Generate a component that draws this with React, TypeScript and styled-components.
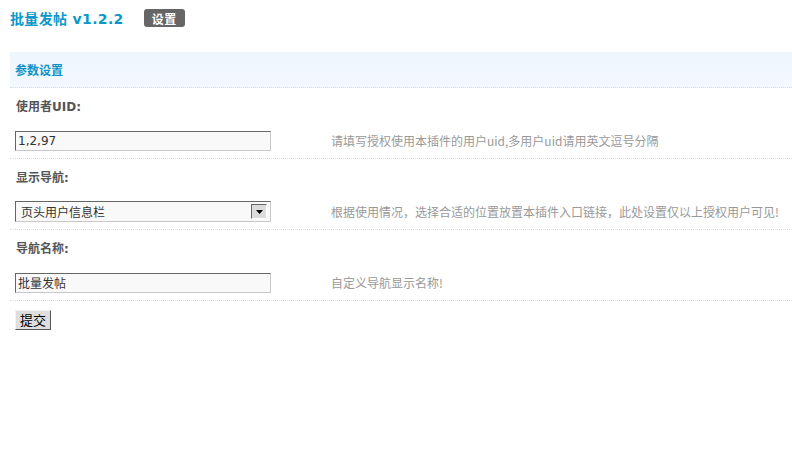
import React from "react";
import styled, { createGlobalStyle } from "styled-components";

const Global = createGlobalStyle`
  html, body { margin: 0; padding: 0; background: #fff; }
  body { font: 12px "DejaVu Sans", "Noto Sans CJK SC", sans-serif; color: #555; }
`;

const Page = styled.div`
  padding: 0 0 0 10px;
`;

const TopBar = styled.div`
  display: flex;
  align-items: center;
  height: 36px;
  gap: 20px;
`;

const Title = styled.h1`
  margin: 0;
  font: bold 14px "DejaVu Sans", "Noto Sans CJK SC", sans-serif;
  color: #0a97c9;
  letter-spacing: 0.35px;
`;

const Badge = styled.span`
  display: inline-flex;
  align-items: center;
  justify-content: center;
  height: 18px;
  padding: 0 8px;
  border-radius: 3px;
  background: #666;
  color: #fff;
  font: bold 12px "Noto Sans CJK SC", sans-serif;
  letter-spacing: 0.5px;
`;

const Panel = styled.div`
  margin-top: 16px;
`;

const PanelHead = styled.div`
  height: 35px;
  display: flex;
  align-items: center;
  padding-left: 5px;
  background: linear-gradient(#eef5fc, #f3f9fe);
  border-bottom: 1px dotted #c9e4f1;
  font: bold 12px "Noto Sans CJK SC", sans-serif;
  color: #1192c7;
`;

const LabelRow = styled.div`
  height: 35px;
  display: flex;
  align-items: center;
  padding-left: 6px;
  font: bold 12px "DejaVu Sans", "Noto Sans CJK SC", sans-serif;
  color: #555;
`;

const FieldRow = styled.div`
  height: 35px;
  display: grid;
  grid-template-columns: 316px 1fr;
  align-items: center;
  border-bottom: 1px dotted #c9e4f1;
`;

const FieldCell = styled.div`
  padding-left: 5px;
  display: flex;
  align-items: center;
`;

const Hint = styled.div`
  padding-left: 5px;
  color: #999;
  font: 12px "Noto Sans CJK SC", sans-serif;
`;

const TextInput = styled.input`
  box-sizing: border-box;
  width: 256px;
  height: 20px;
  margin: 0;
  padding: 0 2px;
  border: 1px solid;
  border-color: #666 #c8c8c8 #c8c8c8 #666;
  background: #f9f9f9;
  color: #333;
  font: 12px "DejaVu Sans", "Noto Sans CJK SC", sans-serif;
  outline: none;
`;

const SelectWrap = styled.div`
  position: relative;
  width: 256px;
  height: 21px;
`;

const Select = styled.select`
  appearance: none;
  box-sizing: border-box;
  width: 256px;
  height: 21px;
  margin: 0;
  padding: 0 0 0 5px;
  border: 1px solid;
  border-color: #666 #c8c8c8 #c8c8c8 #666;
  background: #f9f9f9;
  color: #333;
  font: 12px "Noto Sans CJK SC", sans-serif;
  outline: none;
`;

const Arrow = styled.span`
  position: absolute;
  right: 4px;
  top: 3px;
  width: 16px;
  height: 15px;
  box-sizing: border-box;
  border: 1px solid;
  border-color: #666 #fff #fff #666;
  background: #dcdcdc;
  display: flex;
  align-items: center;
  justify-content: center;
  pointer-events: none;
`;

const ButtonRow = styled.div`
  padding: 9px 0 0 5px;
`;

const Submit = styled.button`
  box-sizing: border-box;
  height: 20px;
  padding: 0 4px;
  margin: 0;
  border: 1px solid;
  border-color: #f4f4f4 #555 #555 #f4f4f4;
  background: #dedede;
  color: #000;
  font: 13px "Noto Sans CJK SC", sans-serif;
  line-height: 16px;
`;

export default function App() {
  return (
    <Page>
      <Global />
      <TopBar>
        <Title>批量发帖 v1.2.2</Title>
        <Badge>设置</Badge>
      </TopBar>
      <Panel>
        <PanelHead>参数设置</PanelHead>
        <LabelRow>使用者UID:</LabelRow>
        <FieldRow>
          <FieldCell>
            <TextInput defaultValue="1,2,97" />
          </FieldCell>
          <Hint>请填写授权使用本插件的用户uid,多用户uid请用英文逗号分隔</Hint>
        </FieldRow>
        <LabelRow>显示导航:</LabelRow>
        <FieldRow>
          <FieldCell>
            <SelectWrap>
              <Select defaultValue="1">
                <option value="1">页头用户信息栏</option>
              </Select>
              <Arrow>
                <svg width="7" height="4" viewBox="0 0 7 4">
                  <path d="M0 0h7L3.5 4z" fill="#000" />
                </svg>
              </Arrow>
            </SelectWrap>
          </FieldCell>
          <Hint>根据使用情况，选择合适的位置放置本插件入口链接，此处设置仅以上授权用户可见!</Hint>
        </FieldRow>
        <LabelRow>导航名称:</LabelRow>
        <FieldRow>
          <FieldCell>
            <TextInput defaultValue="批量发帖" />
          </FieldCell>
          <Hint>自定义导航显示名称!</Hint>
        </FieldRow>
        <ButtonRow>
          <Submit>提交</Submit>
        </ButtonRow>
      </Panel>
    </Page>
  );
}
